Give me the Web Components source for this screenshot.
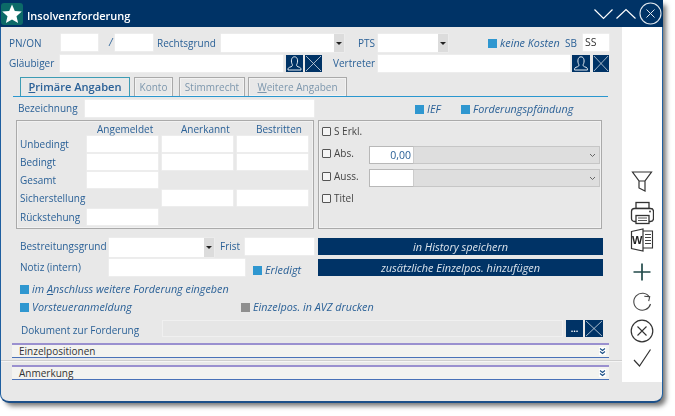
<!DOCTYPE html>
<html lang="de"><head><meta charset="utf-8"><title>Insolvenzforderung</title>
<style>
html,body{margin:0;background:#fff}
body{font:10px/14px "Open Sans",sans-serif;color:#2b6197;width:675px;height:416px;overflow:hidden}
</style></head><body>
<app-window>
  <span slot="title">Insolvenzforderung</span>

  <x-row style="margin-top:7px;padding-left:8px;height:18px">
    <x-label style="width:52px;margin-top:1px">PN/ON</x-label><x-input style="width:37px"></x-input>
    <x-label style="margin-left:11px;width:6px;font-style:italic">/</x-label><x-input style="width:38px"></x-input>
    <x-label style="margin-left:4px;width:64px;margin-top:1px">Rechtsgrund</x-label><x-select style="width:123px"></x-select>
    <x-label style="margin-left:14px;width:20px;margin-top:1px">PTS</x-label><x-select style="width:70px"></x-select>
    <x-check style="margin-left:40px;width:77px;margin-top:3px" on>keine Kosten</x-check>
    <x-label style="width:18px;margin-top:1px">SB</x-label><x-input style="width:26px;color:#333;padding-left:2px;box-sizing:border-box;font-size:10.500px">SS</x-input>
  </x-row>
  <x-row style="margin-top:3px;padding-left:8px;height:17px">
    <x-label style="width:51px">Gläubiger</x-label><x-input style="width:223px"></x-input>
    <x-btn kind="person" style="margin-left:3px;width:17px"></x-btn><x-btn kind="x" style="margin-left:2px;width:17px"></x-btn>
    <x-label style="margin-left:11px;width:45px">Vertreter</x-label><x-input style="width:192px"></x-input>
    <x-btn kind="person" style="margin-left:2px;width:18px"></x-btn><x-btn kind="x" style="margin-left:3px;width:16px"></x-btn>
  </x-row>

  <x-tabs style="margin:5px 0 0 12px;width:595px">
    <x-tab active style="width:110px"><u>P</u>rimäre Angaben</x-tab>
    <x-tab style="margin-left:4px;width:39px">Konto</x-tab>
    <x-tab style="margin-left:6px;width:66px">Stimmrecht</x-tab>
    <x-tab style="margin-left:3px;width:99px"><u>W</u>eitere Angaben</x-tab>
  </x-tabs>

  <x-row style="margin-top:3px;padding-left:17px;height:17px">
    <x-label style="width:67px">Bezeichnung</x-label><x-input style="width:229px"></x-input>
    <x-check style="margin-left:101px;width:46px;margin-top:3px" on>IEF</x-check>
    <x-check style="margin-top:3px" on>Forderungspfändung</x-check>
  </x-row>

  <x-row style="margin-top:3px;padding-left:15px;height:109px">
    <x-group style="width:298px">
      <x-amounts>
        <i></i><x-label class="h" style="padding-left:10px;margin-top:-1px">Angemeldet</x-label><x-label class="h" style="padding-left:19px;margin-top:-1px">Anerkannt</x-label><x-label class="h" style="padding-left:19px;margin-top:-1px">Bestritten</x-label>
        <x-label>Unbedingt</x-label><x-input style="height:16px"></x-input><x-input style="height:16px"></x-input><x-input style="height:16px"></x-input>
        <x-label>Bedingt</x-label><x-input style="height:16px"></x-input><x-input style="height:16px"></x-input><x-input style="height:16px"></x-input>
        <x-label>Gesamt</x-label><x-input style="height:16px"></x-input><i></i><i></i>
        <x-label>Sicherstellung</x-label><i></i><x-input style="height:16px"></x-input><x-input style="height:16px"></x-input>
        <x-label style="margin-top:1px">Rückstehung</x-label><x-input style="height:16px;margin-top:1px"></x-input><i></i><i></i>
      </x-amounts>
    </x-group>
    <x-group style="width:284px;margin-left:4px">
      <x-options>
        <x-check box style="margin-top:1px">S Erkl.</x-check>
        <x-row style="margin-top:9px;height:18px">
          <x-check box style="width:47px;margin-top:1px">Abs.</x-check>
          <x-combo value="0,00" style="width:231px"></x-combo>
        </x-row>
        <x-row style="margin-top:5px;height:18px">
          <x-check box style="width:47px;margin-top:1px">Auss.</x-check>
          <x-combo style="width:231px"></x-combo>
        </x-row>
        <x-check box style="margin-top:5px">Titel</x-check>
      </x-options>
    </x-group>
  </x-row>

  <x-row style="margin-top:9px;padding-left:19px;height:19px">
    <x-label style="width:89px">Bestreitungsgrund</x-label><x-select style="width:105px;height:19px"></x-select>
    <x-label style="margin-left:6px;width:25px">Frist</x-label><x-input style="width:69px"></x-input>
    <x-action style="margin-left:4px;width:285px">in History speichern</x-action>
  </x-row>
  <x-row style="margin-top:2px;padding-left:19px;height:17px">
    <x-label style="width:89px">Notiz (intern)</x-label><x-input style="width:136px"></x-input>
    <x-check style="margin-left:8px;width:57px;margin-top:5px" on>Erledigt</x-check>
    <x-action style="margin-left:8px;width:285px">zusätzliche Einzelpos. hinzufügen</x-action>
  </x-row>
  <x-row style="margin-top:7px;padding-left:19px;height:12px">
    <x-check on>im <u>A</u>nschluss weitere Forderung eingeben</x-check>
  </x-row>
  <x-row style="margin-top:6px;padding-left:19px;height:12px">
    <x-check on style="width:221px">Vorsteueranmeldung</x-check>
    <x-check off>Einzelpos. in AVZ drucken</x-check>
  </x-row>
  <x-row style="margin-top:7px;padding-left:19px;height:17px">
    <x-label style="width:142px;padding-left:1px;box-sizing:border-box;margin-top:2px">Dokument zur Forderung</x-label>
    <x-input style="width:401px;background:#e6e6e6;box-shadow:inset 0 0 0 1px #f0f0f0"></x-input>
    <x-btn kind="dots" style="margin-left:3px;width:17px"></x-btn><x-btn kind="x" style="margin-left:2px;width:18px"></x-btn>
  </x-row>

  <x-bar style="margin:6px 0 0 11px;width:597px">Einzelpositionen</x-bar>
  <x-sep style="margin-top:2px"></x-sep>
  <x-bar style="margin:4px 0 0 11px;width:597px">Anmerkung</x-bar>

  <x-icon slot="side" name="funnel"></x-icon>
  <x-icon slot="side" name="printer" style="margin-top:8px"></x-icon>
  <x-icon slot="side" name="word" style="margin-top:3px"></x-icon>
  <x-icon slot="side" name="plus" style="margin-top:8px"></x-icon>
  <x-icon slot="side" name="refresh" style="margin-top:8px"></x-icon>
  <x-icon slot="side" name="cancel" style="margin-top:3px"></x-icon>
  <x-icon slot="side" name="check" style="margin-top:3px"></x-icon>
</app-window>

<script>
const NAVY='#003366';
const ICONS={
 funnel:'<path d="M2.500 3H21.500L15 12V22L9 19V12Z M9 12H15" fill="none" stroke="#333" stroke-width="1.200"/>',
 printer:'<rect x="6" y="1.500" width="13" height="6" fill="none" stroke="#333" stroke-width="1.300"/><rect x="1.500" y="7.500" width="22" height="13" rx="3" fill="#fff" stroke="#333" stroke-width="1.300"/><rect x="6" y="14.500" width="13" height="8" fill="#fff" stroke="#333" stroke-width="1.300"/><path d="M8 17H17M8 19.500H17" stroke="#555"/><circle cx="20" cy="10.500" r=".9" fill="#333"/>',
 word:'<path d="M12 3H22.500V20H12" fill="none" stroke="#333" stroke-width="1.100"/><path d="M15 6.500H21M15 9.500H21M15 12.500H21M15 15.500H21" stroke="#444"/><path d="M1.500 3.500L13 1V23L1.500 20.500Z" fill="#fff" stroke="#333" stroke-width="1.200"/><text x="7.200" y="16.200" text-anchor="middle" font-family="Liberation Sans" font-weight="700" font-size="11" fill="#222">W</text>',
 plus:'<path d="M12 3.500V20.500M3.500 12H20.500" stroke="#224a4a" stroke-width="1.700"/>',
 refresh:'<path d="M19.500 5.200A8.500 8.500 0 1 0 20.500 12" fill="none" stroke="#444" stroke-width="1.100"/><path d="M14.300 4.200L19.700 4.800 18.700 9.200" fill="none" stroke="#444" stroke-width="1.100"/>',
 cancel:'<circle cx="12" cy="12" r="10.800" fill="none" stroke="#333" stroke-width="1.200"/><path d="M7.500 7.500L16.500 16.500M16.500 7.500L7.500 16.500" stroke="#333" stroke-width="1.100"/>',
 check:'<path d="M4 14L9.500 20 20.500 3.500" fill="none" stroke="#333" stroke-width="1.200"/>'
};
function def(name,css,html){
  customElements.define(name,class extends HTMLElement{
    constructor(){super();const s=this.attachShadow({mode:'open'});
      s.innerHTML='<style>'+css+'</style>'+(typeof html==='function'?'':html);}
    connectedCallback(){if(typeof html==='function'&&!this._d){this._d=1;this.shadowRoot.innerHTML+=html(this);}}
  });
}
def('app-window',`
  :host{display:flex;flex-direction:column;box-sizing:border-box;width:663px;height:403px;background:#e8e8e8;
    border:1px solid #1f5fa0;border-top:0;border-bottom:2px solid #1c4f88;border-radius:0 0 9px 9px;
    box-shadow:4px 4px 5px -1px rgba(0,0,0,.55);margin:0;filter:blur(.35px)}
  header{flex:none;display:flex;align-items:center;height:27px;background:${NAVY};margin:0 -1px;position:relative}
  .logo{flex:none;width:22px;height:22px;margin-left:1px;background:#0c6a68;border-radius:3px;display:flex;align-items:center;justify-content:center}
  .t{flex:1;margin-left:4px;color:#fff;font-weight:600;font-size:11px;line-height:27px;padding-top:2px;box-sizing:border-box;height:27px}
  .ctl{display:flex;align-items:center;gap:3px}
  .body{flex:1;display:flex;align-items:flex-start;min-height:0}
  main{flex:none;width:621px;height:355px;display:flex;flex-direction:column}
  aside{flex:none;width:40px;height:355px;background:#fff;display:flex;flex-direction:column;align-items:center;justify-content:flex-end;padding-bottom:12px;box-sizing:border-box}
`,`
  <header>
    <div class="logo"><svg width="22" height="22" viewBox="0 0 22 22"><path d="M11 1.500L13.800 8 20.800 8.600 15.500 13.200 17.100 20 11 16.400 4.900 20 6.500 13.200 1.200 8.600 8.200 8Z" fill="#fff"/></svg></div>
    <div class="t"><slot name="title"></slot></div>
    <div class="ctl">
      <svg width="19" height="12" viewBox="0 0 19 12"><path d="M.5 1.500L9.500 10.500 18.500 1.500" fill="none" stroke="#fff" stroke-width="1.200"/></svg>
      <svg width="20" height="12" viewBox="0 0 20 12"><path d="M.5 10.500L10 1.500 19.500 10.500" fill="none" stroke="#fff" stroke-width="1.200"/></svg>
      <svg width="23" height="23" viewBox="0 0 23 23" style="margin-right:1px"><circle cx="11.500" cy="11.500" r="10.500" fill="none" stroke="#dfe7ee" stroke-width="1.100"/><path d="M7.500 7.500L15.500 15.500M15.500 7.500L7.500 15.500" stroke="#dfe7ee"/></svg>
    </div>
  </header>
  <div class="body"><main><slot></slot></main><aside><slot name="side"></slot></aside></div>
`);
def('x-row',':host{display:flex;align-items:flex-start;box-sizing:border-box;flex:none}','<slot></slot>');
def('x-label',':host{display:block;flex:none;white-space:nowrap;line-height:17px;height:17px}','<slot></slot>');
def('x-input',':host{display:block;flex:none;height:17px;background:#fff;line-height:16px;box-shadow:0 0 0 .5px #f2f2f2}','<slot></slot>');
def('x-select',`:host{display:flex;flex:none;height:18px;background:#fff;box-shadow:0 0 0 .5px #f0f0f0}
  div{margin-left:auto;width:10px;background:#dcdcdc;display:flex;align-items:center;justify-content:center}
  i{border:3px solid transparent;border-top:3px solid #222;border-bottom:0;width:0;height:0;display:block}`,'<div><i></i></div>');
def('x-check',`:host{display:flex;align-items:center;flex:none;height:12px;white-space:nowrap;font-style:italic;font-size:10.800px;gap:3px}
  b{flex:none;width:9px;height:9px;background:#2f97d0}
  :host([off]) b{background:#8f8f8f}
  :host([box]){font-style:normal;font-size:10px;color:#444}
  :host([box]) b{width:7px;height:7px;background:#f4f4f4;border:1px solid #555;border-radius:1px}`,'<b></b><span><slot></slot></span>');
def('x-btn',`:host{display:flex;flex:none;height:17px;background:${NAVY};align-items:center;justify-content:center;color:#fff;overflow:hidden}
  svg{display:block;width:100%;height:100%}`,h=>{
    const k=h.getAttribute('kind');
    if(k==='x')return '<svg viewBox="0 0 17 17" preserveAspectRatio="none"><path d="M1 1L16 16M16 1L1 16" stroke="#cfd9e3" stroke-width=".8"/></svg>';
    if(k==='person')return '<svg viewBox="0 0 17 17"><path d="M6.300 9.500C4.800 7 5 1.800 8.500 1.800S12.200 7 10.700 9.500C10.300 11 11 11.500 13.500 12.300 15 12.800 15 14 15 15H2C2 14 2 12.800 3.500 12.300 6 11.500 6.700 11 6.300 9.500Z" fill="none" stroke="#e8eef3"/></svg>';
    return '<span style="font:700 9px/14px \'Open Sans\',sans-serif">...</span>';
  });
def('x-tabs',`:host{display:flex;align-items:stretch;height:20px;box-sizing:border-box;padding-left:7px;border-bottom:1.500px solid #2a97cf;flex:none}`,'<slot></slot>');
def('x-tab',`:host{display:flex;align-items:center;justify-content:center;flex:none;box-sizing:border-box;height:19px;white-space:nowrap;color:#7d97ad;border:1px solid #a9a9a9;box-shadow:inset 0 0 0 1px #f2f2f2;border-bottom:0}
  :host([active]){color:#2b6197;font-weight:600;font-size:11.100px;border-color:#3d9cb4;box-shadow:none}`,'<slot></slot>');
def('x-group',':host{display:block;flex:none;box-sizing:border-box;height:109px;border:1px solid #aaa;box-shadow:inset 0 0 0 1px #f1f1f1}','<slot></slot>');
def('x-amounts',`:host{display:grid;grid-template-columns:63px 71px 71px 71px;column-gap:4px;grid-template-rows:12px repeat(5,16px);row-gap:2px;padding:1px 0 0 3px;height:100%;box-sizing:border-box}`,'<slot></slot>');
def('x-options',':host{display:flex;flex-direction:column;padding:3px 0 0 3px}','<slot></slot>');
def('x-combo',`:host{display:flex;flex:none;height:18px}
  .v{width:45px;box-sizing:border-box;background:#fff;border:1px solid #b8b8b8;border-right-color:#ccc;text-align:right;line-height:17px;padding-right:2px;font-size:10.500px}
  .s{flex:1;background:#dedede;border:1px solid #c6c6c6;border-left:0;display:flex;align-items:center;justify-content:flex-end;padding-right:3px}`,
  h=>'<div class="v">'+(h.getAttribute('value')||'')+'</div><div class="s"><svg width="7" height="5" viewBox="0 0 7 5"><path d="M1 1L3.500 3.500 6 1" fill="none" stroke="#666"/></svg></div>');
def('x-action',`:host{display:block;flex:none;height:17px;background:${NAVY};color:#dbe4ec;text-align:center;font-style:italic;font-size:10.900px;line-height:17px}`,'<slot></slot>');
def('x-bar',`:host{display:flex;align-items:center;flex:none;box-sizing:border-box;height:15px;background:#f3f3f0;border-top:2px solid #9a90cf;border-bottom:1px solid #4a72b8;color:#333;line-height:12px;padding-left:7px}
  span{flex:1}
  svg{margin-right:3px;display:block}`,'<span><slot></slot></span><svg width="7" height="8" viewBox="0 0 7 8"><rect width="7" height="8" fill="#fff"/><path d="M1 1.500L3.500 3.500 6 1.500M1 4.500L3.500 6.500 6 4.500" fill="none" stroke="#1b4f86" stroke-width="1.100"/></svg>');
def('x-sep',':host{display:block;flex:none;height:1px;background:#cfcfcf;box-shadow:0 1px 0 #f5f5f5}','');
def('x-icon',':host{display:block;flex:none;width:24px;height:24px}svg{display:block}',
  h=>'<svg width="24" height="24" viewBox="0 0 24 24">'+ICONS[h.getAttribute('name')]+'</svg>');
</script>
</body></html>
